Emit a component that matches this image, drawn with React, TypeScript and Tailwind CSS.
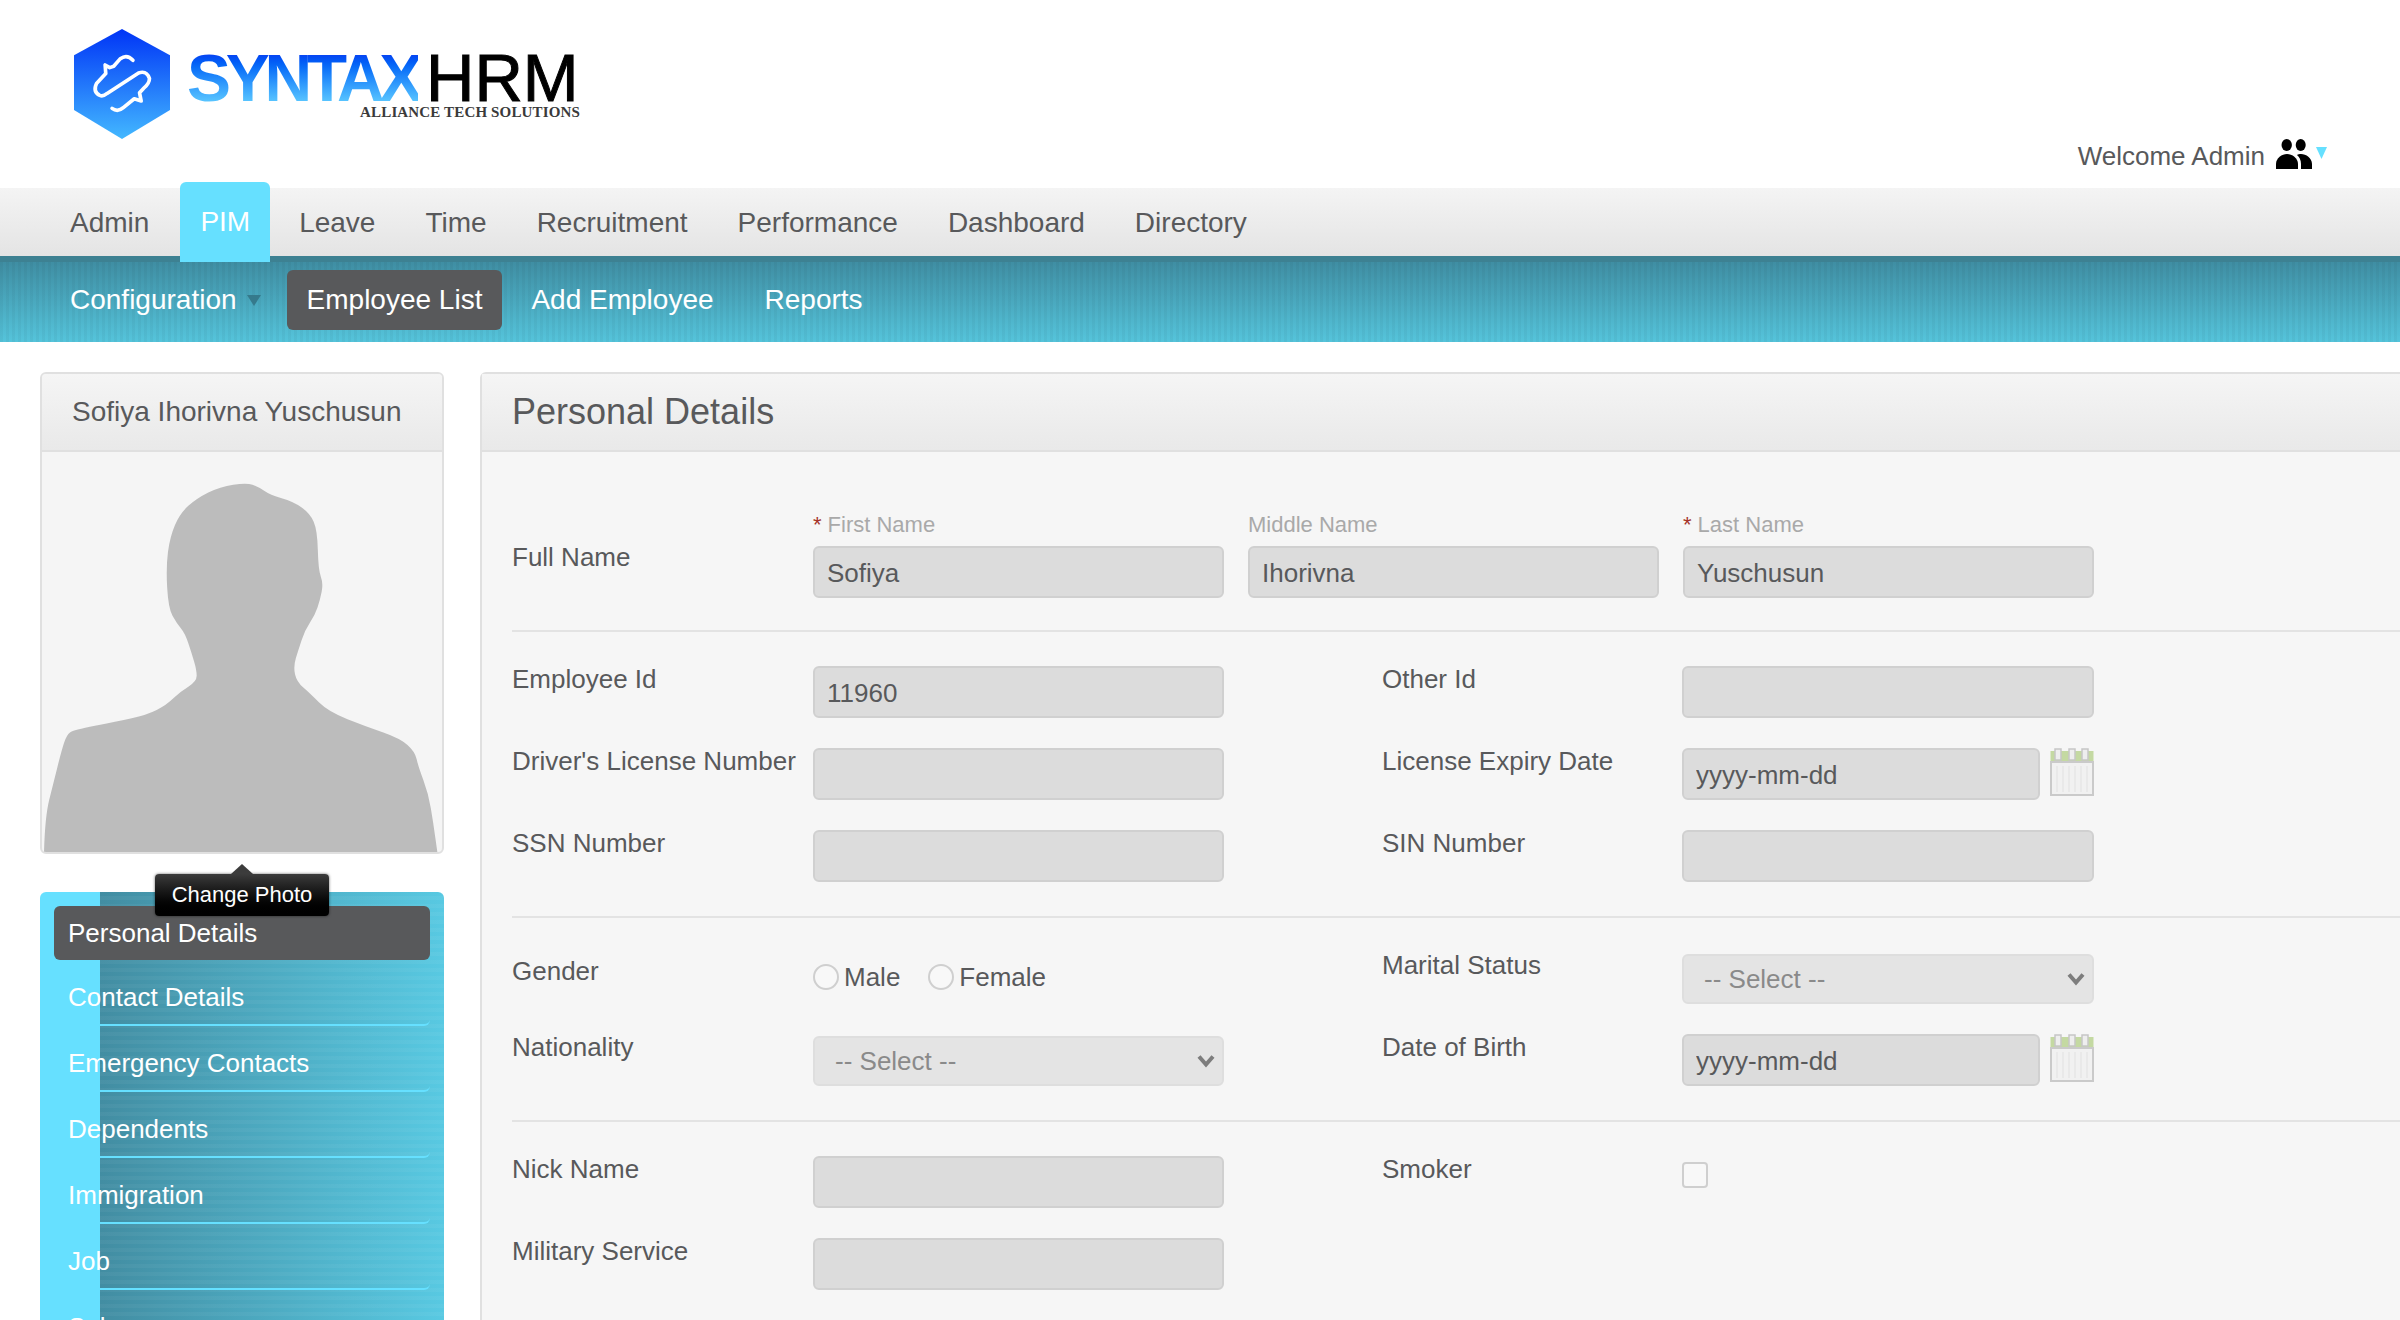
import type { ReactNode } from 'react';

const mainNav = ['Leave', 'Time', 'Recruitment', 'Performance', 'Dashboard', 'Directory'];
const sideMenu = ['Contact Details', 'Emergency Contacts', 'Dependents', 'Immigration', 'Job', 'Salary'];

const silhouette = [
    [132, 1476], [135, 1370], [160, 1270], [185, 1170], [200, 1125], [220, 1110], [350, 1085], [440, 1065],
    [500, 1035], [540, 995], [590, 965], [590, 930], [575, 880], [555, 820], [530, 790], [505, 745],
    [498, 620], [510, 530], [540, 460], [590, 415], [660, 380], [740, 368], [775, 380], [810, 405],
    [880, 425], [930, 460], [952, 510], [955, 630], [970, 670], [960, 720], [945, 765], [915, 810],
    [895, 870], [880, 920], [890, 965], [930, 1000], [985, 1055], [1100, 1100], [1200, 1135], [1245, 1175],
    [1255, 1220], [1285, 1300], [1300, 1390], [1312, 1476],
];

function smoothPath(points: number[][]) {
    let d = `M${points[0][0]} ${points[0][1]}`;
    for (let i = 1; i < points.length - 1; i++) {
        const mx = (points[i][0] + points[i + 1][0]) / 2;
        const my = (points[i][1] + points[i + 1][1]) / 2;
        d += `Q${points[i][0]} ${points[i][1]} ${mx} ${my}`;
    }
    const last = points[points.length - 1];
    return `${d}L${last[0]} ${last[1]}Z`;
}

function Logo() {
    return (
        <div className="flex">
            <svg width="96" height="112" viewBox="40 25 290 333">
                <defs>
                    <linearGradient id="hex" x1="0" y1="0" x2="0" y2="1">
                        <stop offset="0" stopColor="#0034f6" />
                        <stop offset="1" stopColor="#43b8ff" />
                    </linearGradient>
                </defs>
                <path d="M185 25L330 105V270L185 358L40 270V105Z" fill="url(#hex)" />
                <path
                    d="M218 120Q200 100 180 115L160 138L148 142L134 134L136 160L108 190Q96 215 118 226Q128 230 140 220L235 158Q260 150 268 175Q268 190 250 205L238 218L243 243L222 236L190 262Q172 278 155 265"
                    fill="none"
                    stroke="#fff"
                    strokeWidth="11"
                    strokeLinecap="round"
                    strokeLinejoin="round"
                />
            </svg>
            <div className="ml-[17px] mt-[25px] flex w-[394px] flex-col">
                <div className="flex h-[50px] items-center">
                    <span className="bg-gradient-to-b from-[#0a3cf2] to-[#5cc8ff] bg-clip-text text-[66px] leading-[50px] font-bold tracking-[-5.3px] text-transparent">SYNTAX</span>
                    <span className="ml-[8px] text-[67px] leading-[50px] text-black [-webkit-text-stroke:1px_black]">HRM</span>
                </div>
                <span className="mt-[3px] self-end pr-[1px] font-['Liberation_Serif',serif] text-[15px] leading-[12px] font-bold tracking-[0.15px] text-[#3a3a3a]">ALLIANCE TECH SOLUTIONS</span>
            </div>
        </div>
    );
}

function PeopleIcon() {
    return (
        <svg width="36" height="30" viewBox="0 0 36 30" fill="#000">
            <ellipse cx="10.7" cy="6" rx="5.2" ry="6" />
            <ellipse cx="24.7" cy="6" rx="5" ry="6" />
            <path d="M0 30v-5c0-6 6-10 11-10s11 4 11 10v5z" />
            <path d="M25 30v-5c0-4-1.5-7-4-9 1-.6 2.5-1 4-1 5 0 11 4 11 10v5z" />
        </svg>
    );
}

function CalendarIcon() {
    return (
        <svg width="44" height="48" viewBox="0 0 44 48" className="ml-[10px] shrink-0">
            <rect x="0.5" y="3" width="43" height="12" fill="#c4d9a2" />
            <rect x="1" y="14" width="42" height="33" fill="#f1f1f1" stroke="#cacaca" strokeWidth="2" />
            {[6, 12, 18, 24, 30, 36].map((x) => (
                <rect key={x} x={x} y="18" width="2" height="26" fill="#e9e9e9" />
            ))}
            {[5, 19, 32].map((x) => (
                <rect key={x} x={x} y="1" width="6" height="11" fill="#eeeeee" stroke="#c6c6c6" strokeWidth="1.5" />
            ))}
        </svg>
    );
}

function Label({ children, className = '' }: { children: ReactNode; className?: string }) {
    return <div className={`text-[26px] leading-[26px] text-[#58595b] ${className}`}>{children}</div>;
}

function TextField({ value = '', width = 'w-[411px]' }: { value?: string; width?: string }) {
    return (
        <input
            readOnly
            value={value}
            className={`block h-[52px] ${width} rounded-md border-2 border-[#d0d0d0] bg-[#dcdcdc] px-[12px] pt-[2px] text-[26px] text-[#58595b] outline-none`}
        />
    );
}

function SelectField({ width = 'w-[411px]' }: { width?: string }) {
    return (
        <div className={`relative mt-[2px] ${width}`}>
            <select className="block h-[50px] w-full appearance-none rounded-md border-2 border-[#dedede] bg-[#e4e4e4] pl-[20px] text-[26px] text-[#8a8a8a] outline-none">
                <option>-- Select --</option>
            </select>
            <svg width="18" height="14" viewBox="0 0 18 14" className="absolute top-[18px] right-[9px]">
                <path d="M2 2.5L9 10.5L16 2.5" fill="none" stroke="#7d7d7d" strokeWidth="4" />
            </svg>
        </div>
    );
}

function DateField() {
    return (
        <div className="flex w-[412px] items-start">
            <TextField value="yyyy-mm-dd" width="w-[358px]" />
            <CalendarIcon />
        </div>
    );
}

function FormRow({ left, right }: { left: ReactNode; right?: ReactNode }) {
    return (
        <div className="flex items-start">
            <div className="flex w-[870px] items-start">{left}</div>
            {right && <div className="flex items-start">{right}</div>}
        </div>
    );
}

function Radio({ label, className = '' }: { label: string; className?: string }) {
    return (
        <label className={`flex items-center text-[26px] leading-[26px] text-[#58595b] ${className}`}>
            <input type="radio" name="gender" className="mr-[5px] h-[26px] w-[26px] appearance-none rounded-full border-2 border-[#cfcfcf] bg-[#f8f8f8]" />
            <span>{label}</span>
        </label>
    );
}

function NameField({ label, required, value }: { label: string; required?: boolean; value: string }) {
    return (
        <div className="w-[411px]">
            <div className="mb-[10px] text-[22px] leading-[22px] text-[#a9a9a9]">
                {required && <span className="mr-[6px] text-[#a5332a]">*</span>}
                {label}
            </div>
            <TextField value={value} />
        </div>
    );
}

export default function App() {
    return (
        <div className="h-[1320px] w-full overflow-hidden bg-white font-['Liberation_Sans',Arial,sans-serif]">
            {/* top header */}
            <header className="flex h-[188px] justify-between pt-[28px] pl-[74px]">
                <Logo />
                <div className="flex items-center self-end pr-[73px] pb-[12px]">
                    <span className="pt-[5px] text-[26px] text-[#58595b]">Welcome Admin</span>
                    <span className="mr-[4px] ml-[11px]"><PeopleIcon /></span>
                    <svg width="11" height="12" viewBox="0 0 11 12" className="-mt-[2px]"><path d="M0 0H11L5.5 12Z" fill="#66e0ff" /></svg>
                </div>
            </header>

            {/* main menu */}
            <nav className="flex h-[68px] items-center bg-gradient-to-b from-[#f4f4f4] to-[#e4e4e4] pt-[2px] pl-[45px] text-[28px] text-[#58595b]">
                <a className="px-[25px]">Admin</a>
                <a className="relative z-10 mr-[4px] ml-[6px] -mt-[8px] flex h-[80px] items-center self-start rounded-t-md bg-[#66e0ff] px-[20px] text-white">PIM</a>
                {mainNav.map((item) => (
                    <a key={item} className="px-[25px]">{item}</a>
                ))}
            </nav>

            {/* sub menu */}
            <div className="flex h-[86px] items-center border-t-[6px] border-[#3d8192] bg-[repeating-linear-gradient(90deg,rgba(0,0,0,0.035)_0_3px,transparent_3px_6px),linear-gradient(180deg,#3f8ea3,#55c4db)] pb-[4px] pl-[70px] text-[28px] text-white">
                <span>Configuration</span>
                <svg width="14" height="11" viewBox="0 0 14 11" className="ml-[10px]"><path d="M0 0H14L7 11Z" fill="#357a8c" /></svg>
                <span className="ml-[26px] flex h-[60px] items-center rounded-md bg-[#58595b] px-[20px]">Employee List</span>
                <span className="ml-[29px]">Add Employee</span>
                <span className="ml-[51px]">Reports</span>
            </div>

            <div className="flex items-start pt-[30px] pl-[40px]">
                {/* left column */}
                <aside className="w-[404px] shrink-0">
                    <div className="overflow-hidden rounded-md border-2 border-[#e0e0e0] bg-[#f5f5f5]">
                        <div className="flex h-[78px] items-center border-b-2 border-[#e0e0e0] bg-gradient-to-b from-[#f5f5f5] to-[#e9e9e9] pl-[30px] text-[28px] text-[#58595b]">
                            Sofiya Ihorivna Yuschusun
                        </div>
                        <svg viewBox="126 276 1200 1200" className="block h-[400px] w-[400px]">
                            <path d={smoothPath(silhouette)} fill="#bcbcbc" />
                        </svg>
                    </div>

                    <div className="relative mt-[38px] rounded-t-md border-l-[60px] border-[#66e0ff] bg-[repeating-linear-gradient(0deg,rgba(255,255,255,0.04)_0_4px,transparent_4px_8px),linear-gradient(90deg,#428da2,#58c9e2)] pt-[14px] pr-[14px] pb-[40px] text-[26px] text-white">
                        {/* change photo tooltip */}
                        <div className="absolute -top-[18px] left-[55px] z-10 flex h-[42px] w-[174px] items-center justify-center rounded bg-gradient-to-b from-[#3c3c3c] to-black pb-[2px] text-[22px] shadow-[0_0_3px_rgba(0,0,0,0.6)]">
                            <span className="absolute -top-[10px] left-[76px] h-0 w-0 border-x-[11px] border-b-[10px] border-x-transparent border-b-[#3c3c3c]" />
                            Change Photo
                        </div>
                        <div className="-ml-[46px] flex h-[54px] items-center rounded-md bg-[#58595b] pl-[14px]">Personal Details</div>
                        {sideMenu.map((item) => (
                            <div key={item} className="flex h-[66px] items-center rounded-br-md border-b-2 border-[#66e0ff] pt-[10px]">
                                <span className="-ml-[32px]">{item}</span>
                            </div>
                        ))}
                    </div>
                </aside>

                {/* personal details panel */}
                <main className="ml-[36px] h-[1200px] w-[1930px] shrink-0 rounded-md border-2 border-[#e0e0e0] bg-[#f6f6f6]">
                    <div className="flex h-[78px] items-center border-b-2 border-[#e0e0e0] bg-gradient-to-b from-[#f5f5f5] to-[#e9e9e9] pl-[30px] text-[36px] text-[#58595b]">
                        Personal Details
                    </div>
                    <div className="pl-[30px]">
                        <section className="flex border-b-2 border-[#e3e3e3] pt-[62px] pb-[32px]">
                            <Label className="mt-[30px] w-[301px]">Full Name</Label>
                            <div className="flex gap-[24px]">
                                <NameField label="First Name" required value="Sofiya" />
                                <NameField label="Middle Name" value="Ihorivna" />
                                <NameField label="Last Name" required value="Yuschusun" />
                            </div>
                        </section>

                        <section className="flex flex-col gap-[30px] border-b-2 border-[#e3e3e3] py-[34px]">
                            <FormRow
                                left={<><Label className="w-[301px]">Employee Id</Label><TextField value="11960" /></>}
                                right={<><Label className="w-[300px]">Other Id</Label><TextField width="w-[412px]" /></>}
                            />
                            <FormRow
                                left={<><Label className="w-[301px]">Driver's License Number</Label><TextField /></>}
                                right={<><Label className="w-[300px]">License Expiry Date</Label><DateField /></>}
                            />
                            <FormRow
                                left={<><Label className="w-[301px]">SSN Number</Label><TextField /></>}
                                right={<><Label className="w-[300px]">SIN Number</Label><TextField width="w-[412px]" /></>}
                            />
                        </section>

                        <section className="flex flex-col gap-[30px] border-b-2 border-[#e3e3e3] py-[34px]">
                            <FormRow
                                left={
                                    <>
                                        <Label className="mt-[6px] w-[301px]">Gender</Label>
                                        <div className="mt-[12px] flex">
                                            <Radio label="Male" />
                                            <Radio label="Female" className="ml-[28px]" />
                                        </div>
                                    </>
                                }
                                right={
                                    <>
                                        <Label className="w-[300px]">Marital Status</Label>
                                        <SelectField width="w-[412px]" />
                                    </>
                                }
                            />
                            <FormRow
                                left={<><Label className="w-[301px]">Nationality</Label><SelectField /></>}
                                right={<><Label className="w-[300px]">Date of Birth</Label><DateField /></>}
                            />
                        </section>

                        <section className="flex flex-col gap-[30px] py-[34px]">
                            <FormRow
                                left={<><Label className="w-[301px]">Nick Name</Label><TextField /></>}
                                right={
                                    <>
                                        <Label className="w-[300px]">Smoker</Label>
                                        <input type="checkbox" className="mt-[6px] h-[26px] w-[26px] appearance-none rounded border-2 border-[#cfcfcf] bg-[#f8f8f8]" />
                                    </>
                                }
                            />
                            <FormRow left={<><Label className="w-[301px]">Military Service</Label><TextField /></>} />
                        </section>
                    </div>
                </main>
            </div>
        </div>
    );
}
